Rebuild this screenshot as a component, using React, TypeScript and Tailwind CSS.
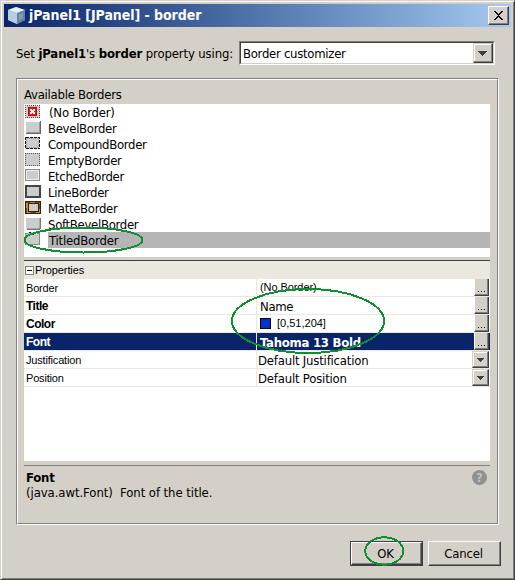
import React from "react";

const UI = "font-['DejaVu_Sans_Condensed','DejaVu_Sans',sans-serif] [font-stretch:condensed]";
const SMALL = "font-['Liberation_Sans',sans-serif]";

const borders = [
  "(No Border)",
  "BevelBorder",
  "CompoundBorder",
  "EmptyBorder",
  "EtchedBorder",
  "LineBorder",
  "MatteBorder",
  "SoftBevelBorder",
  "TitledBorder",
];

function BorderIcon({ kind }: { kind: number }) {
  return (
    <svg width="16" height="16" viewBox="0 0 16 16" shapeRendering="crispEdges" className="block shrink-0">
      {kind === 0 && (
        <>
          <rect x="1" y="2" width="14" height="12" fill="#ccc" />
          <path d="M0 1.5h15M0 13.5h15M0.5 1v13M14.5 1v13" fill="none" stroke="#444" strokeDasharray="1 1" />
          <rect x="3" y="3" width="9" height="9" fill="#c00" />
          <rect x="4" y="4" width="7" height="7" fill="#f01818" />
          <path d="M5 5h2v1h1v-1h2v2h-1v1h1v2h-2v-1h-1v1h-2v-2h1v-1h-1z" fill="#fff" />
        </>
      )}
      {kind === 1 && (
        <>
          <rect x="1" y="2" width="14" height="12" fill="#ccc" />
          <path d="M15 1h1v13H1v-1h14z" fill="#666" />
          <path d="M14 2h1v11H2v-1h12z" fill="#999" />
        </>
      )}
      {kind === 2 && (
        <>
          <rect x="1" y="1" width="13" height="12" fill="#ccc" />
          <rect x="0.5" y="1.5" width="14" height="11" fill="none" stroke="#111" strokeDasharray="3 1" />
          <rect x="1.5" y="2.5" width="12" height="9" fill="none" stroke="#999" strokeDasharray="1 1" />
        </>
      )}
      {kind === 3 && (
        <>
          <rect x="0" y="1" width="15" height="13" fill="#ccc" />
          <path d="M0 1.5h15M0 13.5h15M0.5 1v13M14.5 1v13" fill="none" stroke="#555" strokeDasharray="1 1" />
        </>
      )}
      {kind === 4 && (
        <>
          <rect x="0.5" y="1.5" width="14" height="11" fill="#ccc" stroke="#8a8a8a" />
          <rect x="1.5" y="2.5" width="12" height="9" fill="none" stroke="#eee" />
        </>
      )}
      {kind === 5 && <rect x="1" y="2" width="14" height="11" fill="#ccc" stroke="#444" strokeWidth="2" />}
      {kind === 6 && (
        <>
          <rect x="0.5" y="1.5" width="15" height="12" fill="#d98a10" stroke="#222" />
          <path d="M1 2h4v1H1zM10 2h5v1h-5zM1 8h1v5H1zM14 4h1v5h-1zM6 12h5v1H6z" fill="#8a4000" />
          <rect x="3.5" y="3.5" width="10" height="8" fill="#ccc" stroke="#222" />
        </>
      )}
      {kind === 7 && (
        <>
          <rect x="1" y="2" width="13" height="11" fill="#ccc" />
          <path d="M15 2h1v11h-1v1H2v-1h12v-1h1z" fill="#777" />
          <path d="M14 2h1v10h-1v1H2v-1h12z" fill="#aaa" />
        </>
      )}
      {kind === 8 && (
        <>
          <rect x="0.5" y="1.5" width="14" height="11" fill="#ccc" stroke="#888" />
          <path d="M3 0h9v3H3z" fill="#ccc" />
          <path d="M4 0h2v1H4zM5 1h1v2H5zM8 0h1v3H8zM10 0h1v2h-1z" fill="#111" />
        </>
      )}
    </svg>
  );
}

function Arrow() {
  return (
    <svg width="9" height="5" viewBox="0 0 9 5" shapeRendering="crispEdges" className="block">
      <path d="M0 0h9v1h-1v1h-1v1h-1v1h-1v1h-1v-1h-1v-1h-1v-1h-1v-1h-1z" fill="#404040" />
    </svg>
  );
}

type Row = { name: string; bold?: boolean; value: React.ReactNode; kind: "dots" | "arrow"; selected?: boolean };

const rows: Row[] = [
  {
    name: "Border",
    value: <span className={`${SMALL} pl-[3px] text-[11px] tracking-[-0.08px]`}>(No Border)</span>,
    kind: "dots",
  },
  { name: "Title", bold: true, value: <span className="pt-px pl-[3px] tracking-[-0.35px]">Name</span>, kind: "dots" },
  {
    name: "Color",
    bold: true,
    value: (
      <span className={`${SMALL} flex items-center pl-[3px] text-[11px]`}>
        <span className="mr-[6px] block h-[11px] w-[11px] border border-black bg-[#0033cc]" />
        [0,51,204]
      </span>
    ),
    kind: "dots",
  },
  {
    name: "Font",
    bold: true,
    value: <span className="pt-px pl-[3px] font-bold tracking-[-0.25px] text-white">Tahoma 13 Bold</span>,
    kind: "dots",
    selected: true,
  },
  {
    name: "Justification",
    value: <span className="pt-px pl-px tracking-[-0.2px]">Default Justification</span>,
    kind: "arrow",
  },
  {
    name: "Position",
    value: <span className="pt-px pl-px tracking-[-0.2px]">Default Position</span>,
    kind: "arrow",
  },
];

function PropertyRow({ row }: { row: Row }) {
  return (
    <div className={`flex h-[18px] border-b border-[#ece8e0] ${row.selected ? "bg-[#0a246a]" : "bg-white"}`}>
      <div
        className={`${SMALL} w-[233px] shrink-0 border-r border-[#ece8e0] pl-[2px] leading-[18px] ${
          row.bold ? "text-[12px] font-bold tracking-[-0.5px]" : "text-[11px] tracking-[-0.18px]"
        } ${row.selected ? "text-white" : ""}`}
      >
        {row.name}
      </div>
      <div className="flex flex-1 items-center text-[13px] leading-[17px]">{row.value}</div>
      {row.kind === "dots" ? (
        <div className="mr-px flex h-[17px] w-[15px] shrink-0 items-end justify-center gap-[2px] border-r border-b border-l border-[#404040] border-l-white bg-[#d4d0c8] pb-[3px] shadow-[inset_-1px_-1px_#808080]">
          <i className="block h-px w-px bg-black" />
          <i className="block h-px w-px bg-black" />
          <i className="block h-px w-px bg-black" />
        </div>
      ) : (
        <div className="mr-px flex h-[17px] w-[17px] shrink-0 items-center justify-center border border-[#d4d0c8] border-r-[#404040] border-b-[#404040] bg-[#d4d0c8] pr-px shadow-[inset_-1px_-1px_#808080,inset_1px_1px_#fff]">
          <svg width="7" height="4" viewBox="0 0 7 4" shapeRendering="crispEdges">
            <path d="M0 0h7v1h-1v1h-1v1h-1v1h-1v-1h-1v-1h-1v-1h-1z" fill="#404040" />
          </svg>
        </div>
      )}
    </div>
  );
}

export default function App() {
  return (
    <div
      className={`${UI} relative flex h-[580px] w-[515px] flex-col overflow-hidden border border-[#d4d0c8] border-r-[#404040] border-b-[#404040] bg-[#d4d0c8] pt-[3px] pr-[3px] pb-[2px] pl-[3px] text-[12px] whitespace-nowrap text-black shadow-[inset_1px_1px_#fff,inset_-1px_-1px_#808080]`}
    >
      {/* Title bar */}
      <div className="flex h-[23px] shrink-0 items-center bg-linear-to-r from-[#0a246a] to-[#a6caf0] pr-[2px] pl-[3px]">
        <svg width="19" height="19" viewBox="0 0 19 19" className="block">
          <path d="M1 4L9 1l9 3v10l-8 4-9-4z" fill="#7f9cb8" />
          <path d="M1 4L9 1l9 3-8 3z" fill="#e2f1f7" />
          <path d="M1 4l9 3v11l-9-4z" fill="#b4d0df" />
          <path d="M10 7l8-3v10l-8 4z" fill="#6482a0" />
          <path d="M12 8l4-1v5l-4 3z" fill="#7f9dbb" />
        </svg>
        <span className="ml-[3px] flex-1 text-[14px] font-bold tracking-[-0.05px] text-white">
          jPanel1 [JPanel] - border
        </span>
        <div className="flex h-[19px] w-[21px] items-center justify-center border border-white border-r-[#404040] border-b-[#404040] bg-[#d4d0c8] shadow-[inset_-1px_-1px_#808080]">
          <svg width="9" height="9" viewBox="0 0 9 9" shapeRendering="crispEdges">
            <path
              d="M0 0h2v1h1v1h1v1h1v-1h1v-1h1v-1h2v1h-1v1h-1v1h-1v1h-1v1h1v1h1v1h1v1h1v1h-2v-1h-1v-1h-1v-1h-1v1h-1v1h-1v1h-2v-1h1v-1h1v-1h1v-1h1v-1h-1v-1h-1v-1h-1v-1h-1z"
              fill="#000"
            />
          </svg>
        </div>
      </div>

      {/* Customizer selector */}
      <div className="mt-[14px] flex h-[24px] shrink-0 items-center pl-[12px]">
        <div className="w-[223px] pt-px text-[13px] tracking-[-0.13px]">
          Set <b>jPanel1</b>'s <b>border</b> property using:
        </div>
        <div className="h-[24px] w-[256px] border border-[#808080] border-r-white border-b-white">
          <div className="flex h-[22px] w-[254px] border border-[#404040] border-r-[#d4d0c8] border-b-[#d4d0c8] bg-white">
            <span className="flex-1 pl-[2px] text-[13px] leading-[21px] tracking-[-0.28px]">Border customizer</span>
            <div className="flex h-[20px] w-[20px] items-center justify-center border border-[#d4d0c8] border-r-[#404040] border-b-[#404040] bg-[#d4d0c8] pr-[2px] shadow-[inset_-1px_-1px_#808080,inset_1px_1px_#fff]">
              <Arrow />
            </div>
          </div>
        </div>
      </div>

      {/* Customizer panel */}
      <div className="mt-[13px] ml-[12px] h-[447px] w-[483px] shrink-0 border border-[#808080] border-r-white border-b-white">
        <div className="h-[445px] w-[481px] border border-white border-r-[#808080] border-b-[#808080] pl-[6px]">
          <div className="h-[24px] pt-[5px] text-[13px] leading-[19px] tracking-[-0.25px]">Available Borders</div>
          <div className="h-[153px] w-[466px] bg-white">
            {borders.map((name, i) => (
              <div key={name} className="flex h-[16px] pl-[1px]">
                <BorderIcon kind={i} />
                <div
                  className={`ml-[7px] flex-1 text-[13px] leading-[17px] ${
                    i === 0 ? "pl-px tracking-[-0.2px]" : i === 8 ? "bg-[#b5b5b5] pl-px tracking-[-0.2px]" : "tracking-[-0.3px]"
                  }`}
                >
                  {name}
                </div>
              </div>
            ))}
          </div>
          <div className="mt-[3px] h-[201px] w-[466px] border-t border-[#404040] bg-white">
            <div className={`${SMALL} flex h-[18px] items-center bg-[#ece8e0] pl-[1px] text-[11px] tracking-[-0.1px]`}>
              <svg width="9" height="9" viewBox="0 0 9 9" shapeRendering="crispEdges" className="mr-px">
                <rect x="0.5" y="0.5" width="8" height="8" fill="#fff" stroke="#808080" />
                <path d="M2 4h5v1H2z" fill="#000" />
              </svg>
              Properties
            </div>
            {rows.map((row) => (
              <PropertyRow key={row.name} row={row} />
            ))}
          </div>
          <div className="mt-[4px] flex w-[466px] justify-between border-t border-[#808080] pt-[4px] pr-[3px] pl-[2px]">
            <div className="text-[13px] leading-[15px]">
              <div className="font-bold tracking-[-0.2px]">Font</div>
              <div className="tracking-[-0.07px]">(java.awt.Font)&nbsp; Font of the title.</div>
            </div>
            <div className="flex h-[15px] w-[15px] items-center justify-center rounded-full bg-[#919191] text-[12px] font-bold text-[#c4c4c4]">
              ?
            </div>
          </div>
        </div>
      </div>

      {/* Buttons */}
      <div className="mt-[16px] flex justify-end gap-[5px] pr-[10px] text-[13px] tracking-[-0.2px]">
        <div className="h-[25px] w-[73px] border border-[#404040]">
          <div className="h-[23px] w-[71px] border border-white border-r-[#404040] border-b-[#404040] pr-[2px] text-center leading-[22px] shadow-[inset_-1px_-1px_#808080]">
            OK
          </div>
        </div>
        <div className="h-[25px] w-[73px] border border-white border-r-[#404040] border-b-[#404040] pr-[2px] text-center leading-[24px] shadow-[inset_-1px_-1px_#808080]">
          Cancel
        </div>
      </div>

      {/* Hand-drawn highlight ellipses laid over the dialog */}
      <svg
        className="pointer-events-none absolute -top-px -left-px"
        width="515"
        height="580"
        viewBox="0 0 515 580"
        fill="none"
        stroke="#0f9030"
        strokeWidth="2"
        shapeRendering="crispEdges"
      >
        <ellipse cx="83.5" cy="240" rx="59" ry="12.5" />
        <ellipse cx="308" cy="321" rx="76" ry="32" />
        <ellipse cx="384.3" cy="551" rx="19" ry="13.7" />
      </svg>
    </div>
  );
}
